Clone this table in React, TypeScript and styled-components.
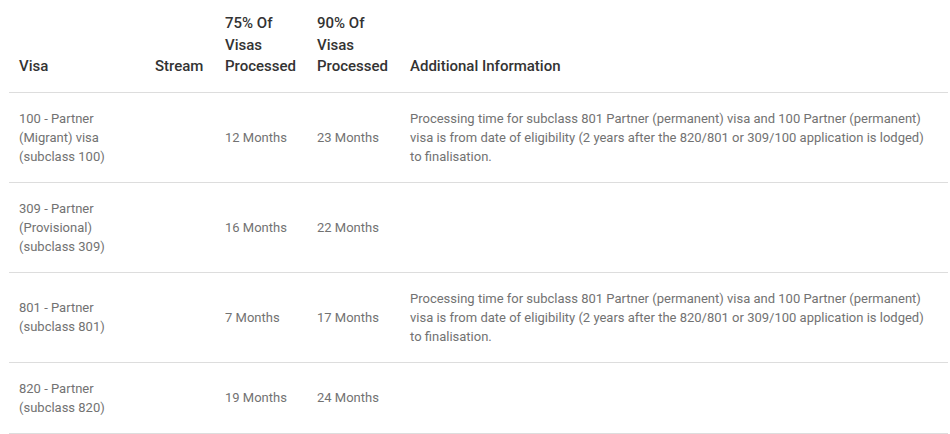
import React from "react";
import styled, { createGlobalStyle } from "styled-components";

const Global = createGlobalStyle`
  html, body { margin: 0; padding: 0; background: #fff; }
  body { font-family: Roboto, "Noto Sans", Arial, sans-serif; }
  *, *::before, *::after { box-sizing: border-box; }
`;

const Wrap = styled.div`
  padding: 0 2px 0 9px;
`;

const Table = styled.table`
  width: 939px;
  border-collapse: collapse;
  table-layout: fixed;
`;

const Th = styled.th<{ $w: number }>`
  width: ${(p) => p.$w}px;
  text-align: left;
  vertical-align: bottom;
  padding: 13px 10px 14px;
  font-size: 15px;
  line-height: 21.5px;
  font-weight: 500;
  color: #333;
  border-bottom: 1px solid #ddd;
`;

const Td = styled.td`
  vertical-align: middle;
  padding: 16px 10px;
  font-size: 13px;
  line-height: 19px;
  font-weight: 400;
  color: #727272;
  border-bottom: 1px solid #ddd;
`;

const note =
  "Processing time for subclass 801 Partner (permanent) visa and 100 Partner (permanent) visa is from date of eligibility (2 years after the 820/801 or 309/100 application is lodged) to finalisation.";

const rows = [
  { visa: ["100 - Partner", "(Migrant) visa", "(subclass 100)"], p75: "12 Months", p90: "23 Months", info: note },
  { visa: ["309 - Partner", "(Provisional)", "(subclass 309)"], p75: "16 Months", p90: "22 Months", info: "" },
  { visa: ["801 - Partner", "(subclass 801)"], p75: "7 Months", p90: "17 Months", info: note },
  { visa: ["820 - Partner", "(subclass 820)"], p75: "19 Months", p90: "24 Months", info: "" },
];

export default function App() {
  return (
    <>
      <Global />
      <Wrap>
        <Table>
          <thead>
            <tr>
              <Th $w={136}>Visa</Th>
              <Th $w={70}>Stream</Th>
              <Th $w={92}>75% Of Visas Processed</Th>
              <Th $w={93}>90% Of Visas Processed</Th>
              <Th $w={548}>Additional Information</Th>
            </tr>
          </thead>
          <tbody>
            {rows.map((r, i) => (
              <tr key={i}>
                <Td>
                  {r.visa.map((l, j) => (
                    <React.Fragment key={j}>
                      {j > 0 && <br />}
                      {l}
                    </React.Fragment>
                  ))}
                </Td>
                <Td></Td>
                <Td>{r.p75}</Td>
                <Td>{r.p90}</Td>
                <Td>{r.info}</Td>
              </tr>
            ))}
          </tbody>
        </Table>
      </Wrap>
    </>
  );
}
